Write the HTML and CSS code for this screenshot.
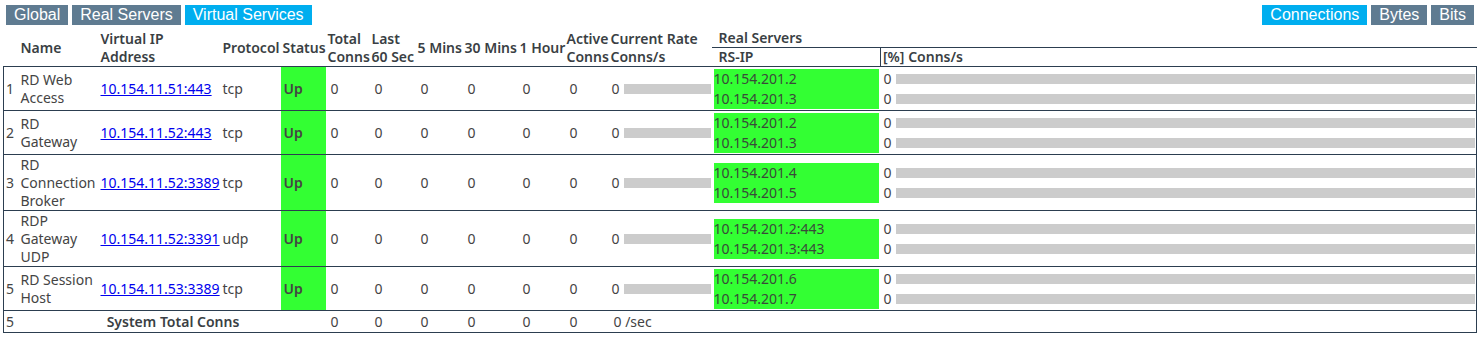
FILE: index.html
```html
<!DOCTYPE html>
<html lang="en">
<head>
  <meta charset="UTF-8">
  <title>Virtual Services</title>
  <link rel="stylesheet" href="styles.css">
</head>
<body>

<div class="toolbar">
  <div class="tabs">
    <span class="tab">Global</span>
    <span class="tab">Real Servers</span>
    <span class="tab active">Virtual Services</span>
  </div>
  <div class="tabs">
    <span class="tab active">Connections</span>
    <span class="tab">Bytes</span>
    <span class="tab">Bits</span>
  </div>
</div>

<table class="stats">
  <colgroup>
    <col style="width:15px"><col style="width:80px"><col style="width:122px"><col style="width:60px">
    <col style="width:45px"><col style="width:44px"><col style="width:46px"><col style="width:47px">
    <col style="width:55px"><col style="width:47px"><col style="width:44px"><col style="width:103px">
    <col style="width:169px"><col>
  </colgroup>
  <thead>
    <tr>
      <th rowspan="2"></th>
      <th rowspan="2">Name</th>
      <th rowspan="2">Virtual IP<br>Address</th>
      <th rowspan="2">Protocol</th>
      <th rowspan="2">Status</th>
      <th rowspan="2">Total<br>Conns</th>
      <th rowspan="2">Last<br>60 Sec</th>
      <th rowspan="2">5 Mins</th>
      <th rowspan="2">30 Mins</th>
      <th rowspan="2">1 Hour</th>
      <th rowspan="2">Active<br>Conns</th>
      <th rowspan="2">Current Rate<br>Conns/s</th>
      <th colspan="2" class="rs-head">Real Servers</th>
    </tr>
    <tr>
      <th class="rs-sub">RS-IP</th>
      <th class="rs-sub pct-head">[%] Conns/s</th>
    </tr>
  </thead>
  <tbody id="rows"></tbody>
  <tfoot>
    <tr>
      <td class="idx">5</td>
      <td colspan="4" class="total-label">System Total Conns</td>
      <td class="num">0</td><td class="num">0</td><td class="num">0</td><td class="num">0</td>
      <td class="num">0</td><td class="num">0</td>
      <td class="num">0 /sec</td>
      <td></td><td></td>
    </tr>
  </tfoot>
</table>

<script>
  const services = [
    { name: 'RD Web<br>Access', vip: '10.154.11.51:443', proto: 'tcp', rs: ['10.154.201.2', '10.154.201.3'] },
    { name: 'RD<br>Gateway', vip: '10.154.11.52:443', proto: 'tcp', rs: ['10.154.201.2', '10.154.201.3'] },
    { name: 'RD<br>Connection<br>Broker', vip: '10.154.11.52:3389', proto: 'tcp', rs: ['10.154.201.4', '10.154.201.5'] },
    { name: 'RDP<br>Gateway<br>UDP', vip: '10.154.11.52:3391', proto: 'udp', rs: ['10.154.201.2:443', '10.154.201.3:443'] },
    { name: 'RD Session<br>Host', vip: '10.154.11.53:3389', proto: 'tcp', rs: ['10.154.201.6', '10.154.201.7'] }
  ];

  const body = document.getElementById('rows');

  services.forEach((s, i) => {
    const tr = document.createElement('tr');
    let html = '<td class="idx">' + (i + 1) + '</td>';
    html += '<td>' + s.name + '</td>';
    html += '<td><a href="#">' + s.vip + '</a></td>';
    html += '<td>' + s.proto + '</td>';
    html += '<td class="status">Up</td>';
    for (let n = 0; n < 6; n++) html += '<td class="num">0</td>';
    html += '<td class="rate"><div class="bar-line"><span>0</span><div class="bar"></div></div></td>';
    html += '<td class="rs-cell"><div class="rs-box">' + s.rs.map(ip => '<div>' + ip + '</div>').join('') + '</div></td>';
    html += '<td class="pct-cell"><div class="pct-box">' + s.rs.map(() => '<div class="bar-line"><span>0</span><div class="bar"></div></div>').join('') + '</div></td>';
    tr.innerHTML = html;
    body.appendChild(tr);
  });
</script>

</body>
</html>
```

FILE: styles.css
```css
body {
  margin: 0;
  padding: 5px 7px 0 3px;
  font-family: "Noto Sans", sans-serif;
  font-size: 14px;
  color: #444;
}

.toolbar {
  display: flex;
  justify-content: space-between;
  padding-left: 3px;
  padding-right: 3px;
}

.tabs {
  display: flex;
  gap: 4px;
}

.tab {
  font-family: "Liberation Sans", Arial, sans-serif;
  font-size: 16px;
  line-height: 20px;
  padding: 0 8px;
  background: #5f7b91;
  color: #fff;
}

.tab.active {
  background: #00aeef;
}

.stats {
  margin-top: 4px;
  width: 1474px;
  border-collapse: collapse;
  table-layout: fixed;
}

.stats th {
  text-align: left;
  font-weight: 600;
  color: #3a3f44;
  padding: 0 0 0 2px;
  line-height: 18px;
  vertical-align: middle;
  white-space: nowrap;
}

.stats th.rs-head {
  padding-left: 7px;
  border-bottom: 1px solid #2c3e50;
}

.stats th.rs-sub {
  padding-left: 7px;
}

.stats th.pct-head {
  padding-left: 2px;
  border-left: 1px solid #2c3e50;
}

.stats tbody tr,
.stats tfoot tr {
  border: 1px solid #2c3e50;
}

.stats td {
  padding: 1px 0 0 2px;
  line-height: 18px;
  vertical-align: middle;
  white-space: nowrap;
}

.stats td.num {
  padding-left: 5px;
}

.stats a {
  color: #0000ee;
}

.stats td.status {
  background: #33ff33;
  font-weight: 600;
  padding-left: 3px;
}

.stats td.rate {
  padding: 0 1px 0 3px;
}

.bar-line {
  display: flex;
  align-items: center;
  height: 20px;
}

.bar-line span {
  width: 12px;
  flex: none;
}

.bar {
  flex: 1;
  height: 10px;
  background: #cccccc;
}

.stats td.rs-cell {
  padding: 2px 0 1px 2px;
}

.rs-box {
  background: #33ff33;
  width: 165px;
  color: #3a4a3a;
}

.rs-box div {
  line-height: 20px;
}

.stats td.pct-cell {
  padding: 2px 1px 1px 3px;
}

.stats td.total-label {
  text-align: center;
  font-weight: 600;
  color: #3a3f44;
}

.stats tfoot td {
  padding-top: 2px;
  padding-bottom: 1px;
}
```
